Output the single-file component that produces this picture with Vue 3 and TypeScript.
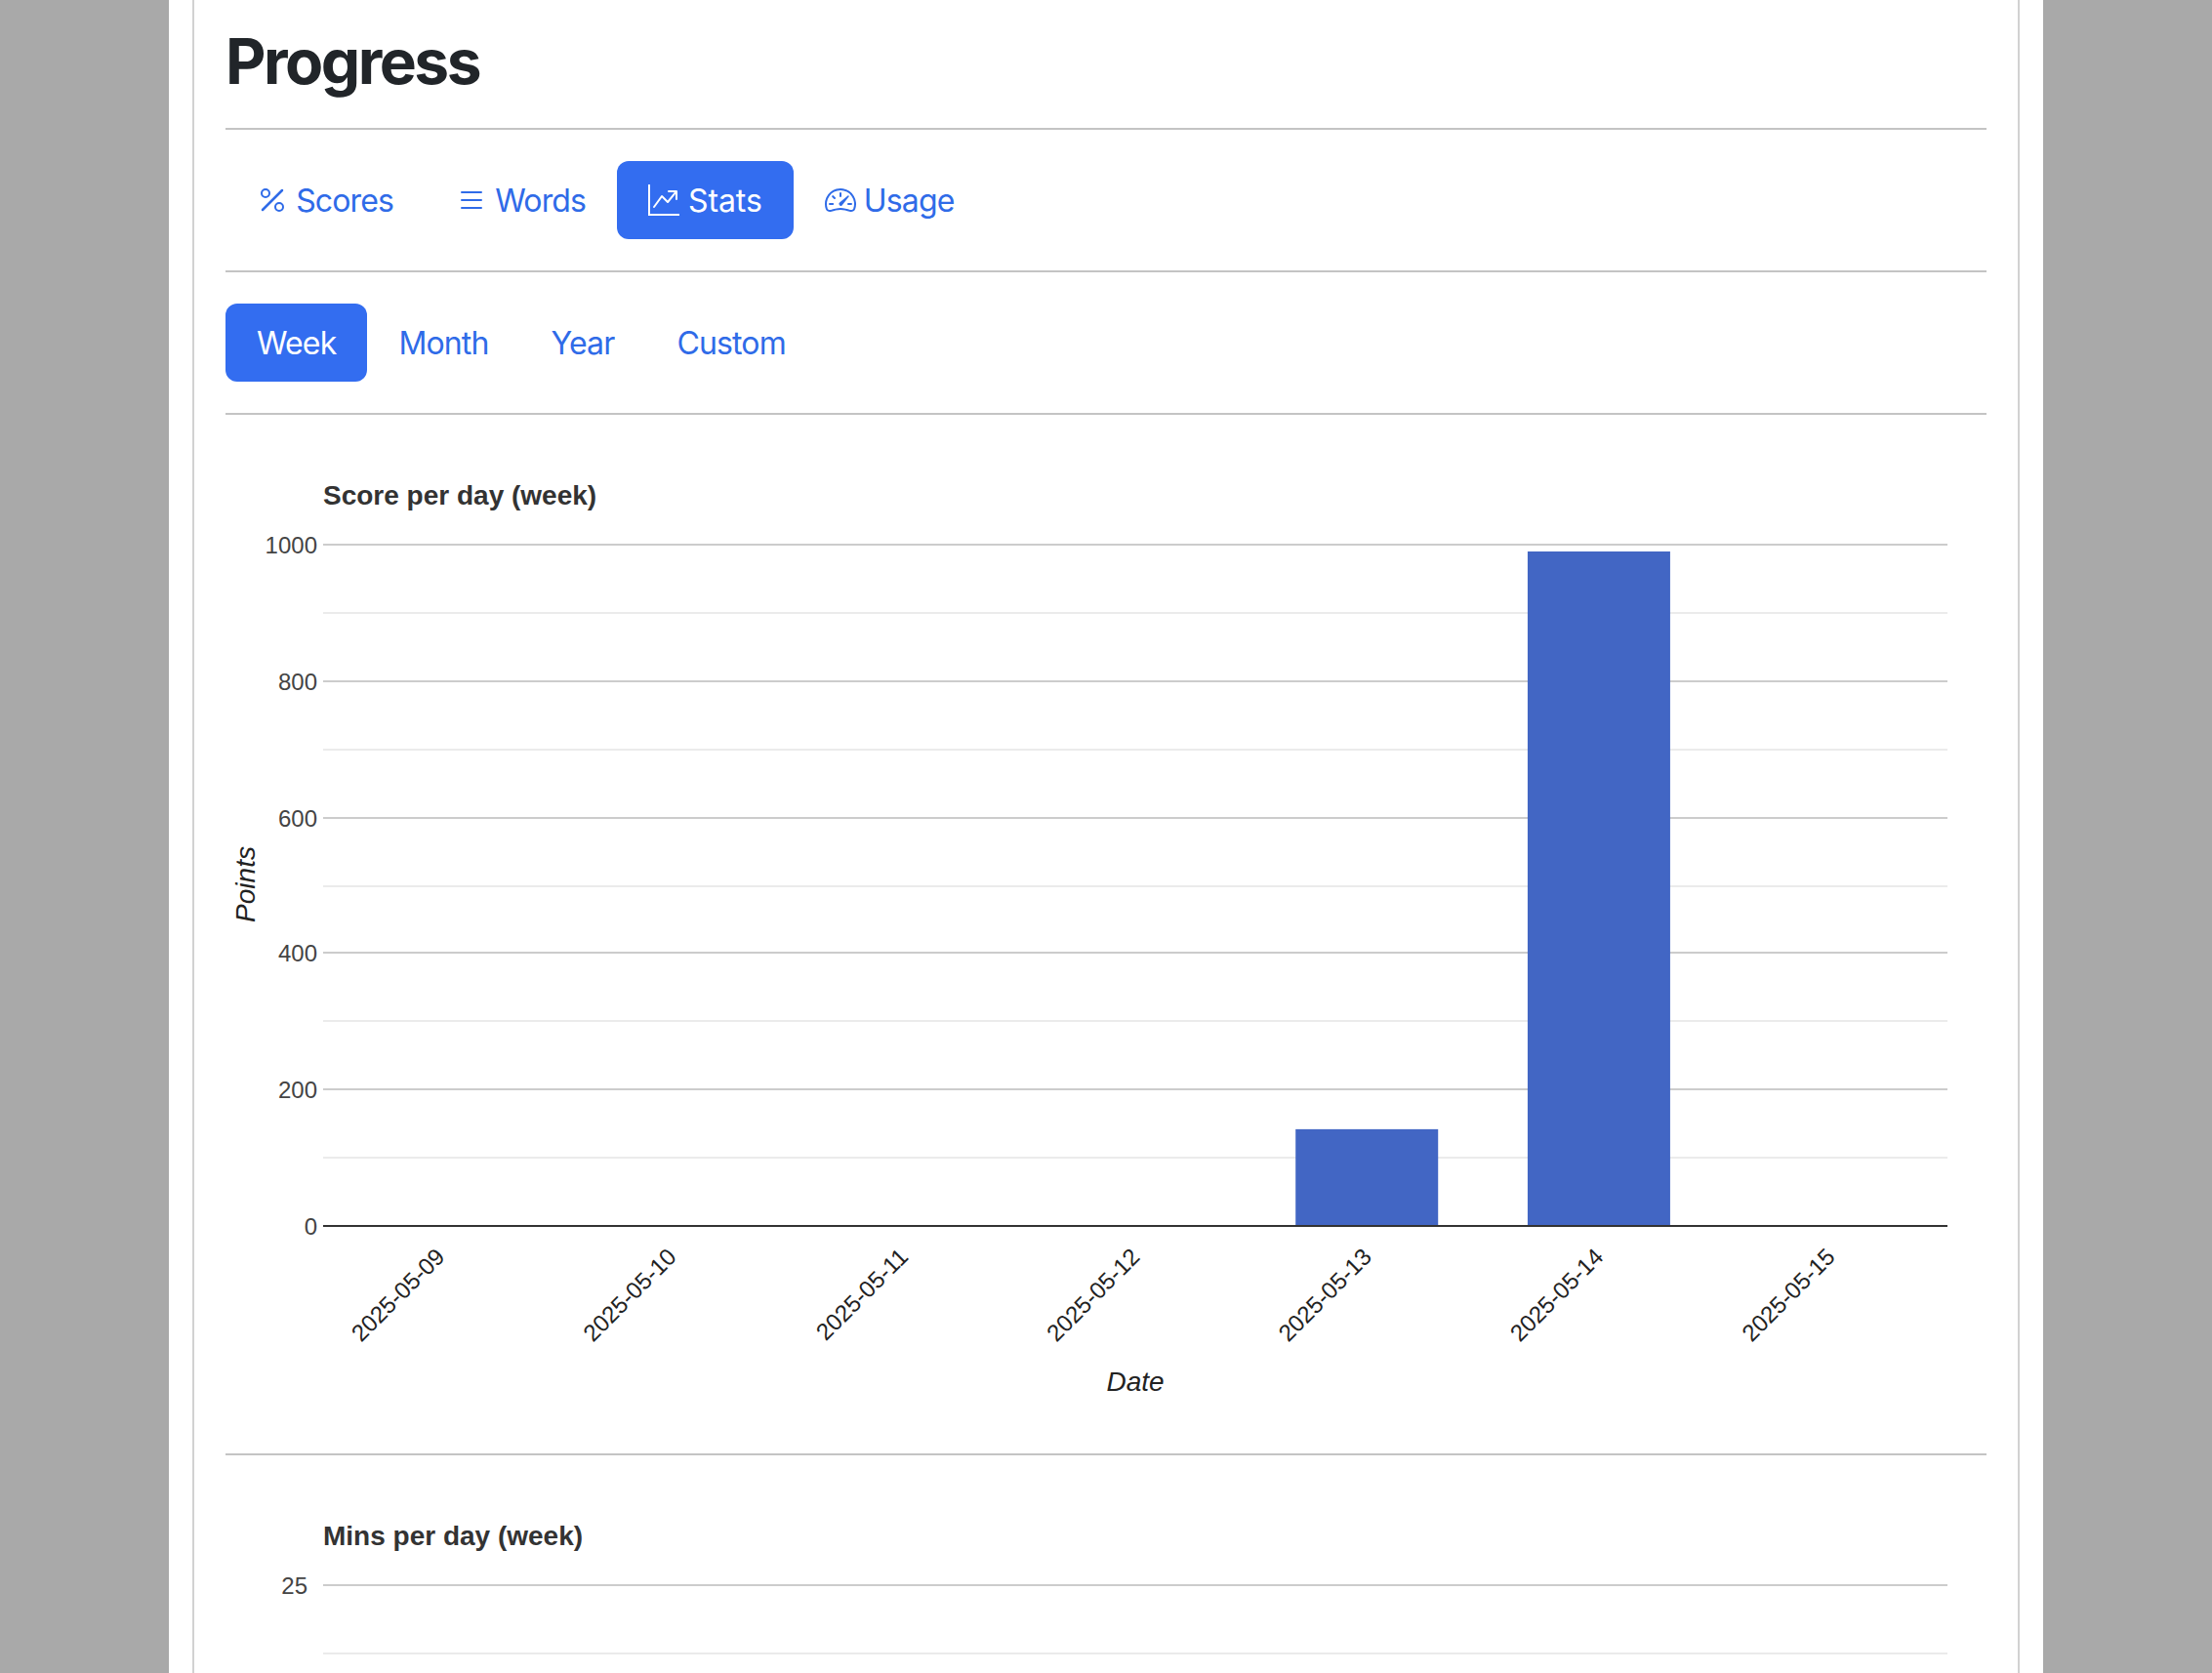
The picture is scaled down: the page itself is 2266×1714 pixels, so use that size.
<script setup lang="ts">
interface Chart {
  title: string
  tickX: number
  height: number
  complete: boolean
  max: number
  ticks: string[]
  bars: number[]
}

const CHART_LEFT = 100
const CHART_WIDTH = 1664
const CHART_TOP = 101
const CHART_HEIGHT = 698
const TICK_OFFSETS = [0, 140, 280, 418, 558, 698]
const MINOR_OFFSET = 70

const dates = ['2025-05-09', '2025-05-10', '2025-05-11', '2025-05-12', '2025-05-13', '2025-05-14', '2025-05-15']

const charts: Chart[] = [
  {
    title: 'Score per day (week)', tickX: 94, height: 1000, complete: true, max: 1000,
    ticks: ['1000', '800', '600', '400', '200', '0'], bars: [0, 0, 0, 0, 142, 990, 0],
  },
  {
    title: 'Mins per day (week)', tickX: 84, height: 220, complete: false, max: 25,
    ticks: ['25'], bars: [],
  },
]

const slot = CHART_WIDTH / 7
const barWidth = 146

function tickY(i: number): number {
  return CHART_TOP + TICK_OFFSETS[i]
}
function minorY(i: number): number {
  return tickY(i) + MINOR_OFFSET
}
function barH(v: number, max: number): number {
  return (v / max) * CHART_HEIGHT
}
function barX(i: number): number {
  return CHART_LEFT + i * slot + (slot - barWidth) / 2 - 0.5
}
function labelX(i: number): number {
  return CHART_LEFT + slot / 2 + 7 + i * 237.4
}
function isGrid(c: Chart, i: number): boolean {
  return !c.complete || i < c.ticks.length - 1
}

const ranges = ['Week', 'Month', 'Year', 'Custom']
</script>

<template>
  <div class="page">
    <div class="sheet">
      <main class="card">
        <h1 class="heading">Progress</h1>
        <hr class="rule" />
        <nav class="pills">
          <a class="pill">
            <svg class="icon" viewBox="0 0 16 16" fill="currentColor"><path d="M13.442 2.558a.625.625 0 0 1 0 .884l-10 10a.625.625 0 1 1-.884-.884l10-10a.625.625 0 0 1 .884 0zM4.5 6a1.5 1.5 0 1 1 0-3 1.5 1.5 0 0 1 0 3zm0 1a2.5 2.5 0 1 0 0-5 2.5 2.5 0 0 0 0 5zm7 6a1.5 1.5 0 1 1 0-3 1.5 1.5 0 0 1 0 3zm0 1a2.5 2.5 0 1 0 0-5 2.5 2.5 0 0 0 0 5z"/></svg>
            Scores
          </a>
          <a class="pill">
            <svg class="icon" viewBox="0 0 16 16" fill="currentColor"><path fill-rule="evenodd" d="M2.5 12a.5.5 0 0 1 .5-.5h10a.5.5 0 0 1 0 1H3a.5.5 0 0 1-.5-.5zm0-4a.5.5 0 0 1 .5-.5h10a.5.5 0 0 1 0 1H3a.5.5 0 0 1-.5-.5zm0-4a.5.5 0 0 1 .5-.5h10a.5.5 0 0 1 0 1H3a.5.5 0 0 1-.5-.5z"/></svg>
            Words
          </a>
          <a class="pill active stats">
            <svg class="icon" viewBox="0 0 16 16" fill="currentColor"><path fill-rule="evenodd" d="M0 0h1v15h15v1H0V0Zm10 3.5a.5.5 0 0 1 .5-.5h4a.5.5 0 0 1 .5.5v4a.5.5 0 0 1-1 0V4.9l-3.613 4.417a.5.5 0 0 1-.74.037L7.06 6.767l-3.656 5.027a.5.5 0 0 1-.808-.588l4-5.5a.5.5 0 0 1 .758-.06l2.609 2.61L13.445 4H10.5a.5.5 0 0 1-.5-.5Z"/></svg>
            Stats
          </a>
          <a class="pill">
            <svg class="icon" viewBox="0 0 16 16" fill="currentColor"><path d="M8 4a.5.5 0 0 1 .5.5V6a.5.5 0 0 1-1 0V4.5A.5.5 0 0 1 8 4zM3.732 5.732a.5.5 0 0 1 .707 0l.915.914a.5.5 0 1 1-.708.708l-.914-.915a.5.5 0 0 1 0-.707zM2 10a.5.5 0 0 1 .5-.5h1.586a.5.5 0 0 1 0 1H2.5A.5.5 0 0 1 2 10zm9.5 0a.5.5 0 0 1 .5-.5h1.5a.5.5 0 0 1 0 1H12a.5.5 0 0 1-.5-.5zm.754-4.246a.389.389 0 0 0-.527-.02L7.547 9.31a.91.91 0 1 0 1.302 1.258l3.434-4.297a.389.389 0 0 0-.029-.518z"/><path fill-rule="evenodd" d="M0 10a8 8 0 1 1 15.547 2.661c-.442 1.253-1.845 1.602-2.932 1.25C11.309 13.488 9.475 13 8 13c-1.474 0-3.31.488-4.615.911-1.087.352-2.49.003-2.932-1.25A7.988 7.988 0 0 1 0 10zm8-7a7 7 0 0 0-6.603 9.329c.203.575.923.876 1.68.63C4.397 12.533 6.358 12 8 12s3.604.532 4.923.96c.757.245 1.477-.056 1.68-.631A7 7 0 0 0 8 3z"/></svg>
            Usage
          </a>
        </nav>
        <hr class="rule" />
        <nav class="pills">
          <a v-for="(r, i) in ranges" :key="r" class="pill" :class="{ active: i === 0 }">{{ r }}</a>
        </nav>
        <template v-for="c in charts" :key="c.title">
          <hr class="rule" />
          <svg class="chart" :viewBox="`0 0 1804 ${c.height}`" width="1804" :height="c.height">
            <text class="title" :x="CHART_LEFT" y="60">{{ c.title }}</text>
            <template v-for="(_, i) in c.ticks" :key="i">
              <rect v-if="isGrid(c, i)" :x="CHART_LEFT" :y="minorY(i) - 1" :width="CHART_WIDTH" height="2" fill="#ebebeb" />
              <rect v-if="isGrid(c, i)" :x="CHART_LEFT" :y="tickY(i) - 1" :width="CHART_WIDTH" height="2" fill="#cccccc" />
            </template>
            <template v-for="(b, i) in c.bars" :key="i">
              <rect v-if="b > 0" :x="barX(i)" :y="CHART_TOP + CHART_HEIGHT - barH(b, c.max)" :width="barWidth" :height="barH(b, c.max)" fill="#4266c4" />
            </template>
            <text v-for="(t, i) in c.ticks" :key="t" class="tick" :x="c.tickX" :y="tickY(i) + 8.5" text-anchor="end">{{ t }}</text>
            <template v-if="c.complete">
              <rect :x="CHART_LEFT" :y="CHART_TOP + CHART_HEIGHT - 1" :width="CHART_WIDTH" height="2" fill="#333333" />
              <text v-for="(d, i) in dates" :key="d" class="date" text-anchor="end"
                :transform="`translate(${labelX(i)} ${CHART_TOP + CHART_HEIGHT + 33}) rotate(-45)`">{{ d }}</text>
              <text class="axis" :x="CHART_LEFT + CHART_WIDTH / 2" y="968" text-anchor="middle">Date</text>
              <text class="axis" text-anchor="middle" transform="translate(30 449) rotate(-90)">Points</text>
            </template>
          </svg>
        </template>
      </main>
    </div>
  </div>
</template>

<style scoped>
.page {
  height: 100vh;
  overflow: hidden;
  background: #a9a9a9;
}
.sheet {
  width: 1920px;
  margin: 0 auto;
  padding: 0 24px;
  box-sizing: border-box;
  background: #fff;
}
.card {
  margin-top: -40px;
  padding: 64px 32px 0;
  border: 2px solid #d2d2d2;
  border-radius: 12px;
  background: #fff;
  font-family: Inter, "Liberation Sans", sans-serif;
}
.heading {
  margin: 0;
  font-size: 64px;
  line-height: 73px;
  font-weight: 700;
  letter-spacing: -2.5px;
  color: #212529;
}
.rule {
  margin: 32px 0;
  border: 0;
  border-top: 2px solid #c4c4c4;
}
.pills {
  display: flex;
}
.pill {
  display: block;
  padding: 17px 32px 15px;
  font-size: 32px;
  line-height: 48px;
  letter-spacing: -0.85px;
  border-radius: 12px;
  color: #2f6be8;
}
.pill.active {
  background: #336df0;
  color: #fff;
}
.pill.stats {
  letter-spacing: -0.1px;
}
.icon {
  width: 32px;
  height: 32px;
  vertical-align: -4px;
}
.chart {
  display: block;
}
.chart text {
  font-family: "Liberation Sans", Arial, sans-serif;
  letter-spacing: 0;
}
.title {
  font-size: 28px;
  font-weight: 700;
  fill: #333;
}
.tick {
  font-size: 24px;
  fill: #444;
}
.date {
  font-size: 24px;
  fill: #222;
}
.axis {
  font-size: 28px;
  font-style: italic;
  fill: #222;
}
</style>
